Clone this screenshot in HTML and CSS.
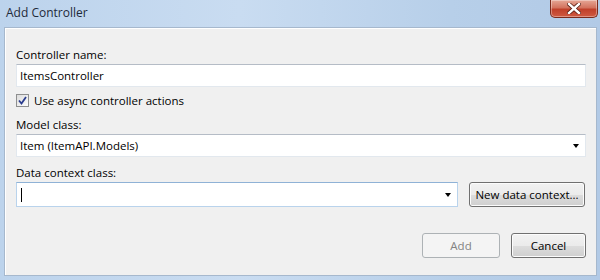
FILE: index.html
```html
<!DOCTYPE html>
<html lang="en">
<head>
  <meta charset="UTF-8">
  <title>Add Controller</title>
  <link rel="stylesheet" href="styles.css">
</head>
<body>
  <div class="window">
    <div class="titlebar">
      <span class="title">Add Controller</span>
      <div class="close">
        <svg width="14" height="11" viewBox="0 0 14 11">
          <path d="M2 1 L12 10 M12 1 L2 10" stroke="#5a1f14" stroke-width="4" stroke-linecap="square"/>
          <path d="M2 1 L12 10 M12 1 L2 10" stroke="#ffffff" stroke-width="2.4" stroke-linecap="square"/>
        </svg>
      </div>
    </div>

    <div class="panel">
      <div class="label">Controller name:</div>
      <div class="textbox">ItemsController</div>

      <label class="check-row">
        <span class="checkbox">
          <svg width="9" height="9" viewBox="0 0 9 9">
            <path d="M1 4.5 L3.5 7.5 L8 1" fill="none" stroke="#2a3c8e" stroke-width="1.8"/>
          </svg>
        </span>
        Use async controller actions
      </label>

      <div class="label">Model class:</div>
      <div class="textbox combo">
        <span>Item (ItemAPI.Models)</span>
        <span class="arrow"></span>
      </div>

      <div class="label">Data context class:</div>
      <div class="row">
        <div class="textbox combo focused">
          <span class="caret"></span>
          <span class="arrow"></span>
        </div>
        <button class="btn wide">New data context...</button>
      </div>

      <div class="actions">
        <button class="btn disabled">Add</button>
        <button class="btn">Cancel</button>
      </div>
    </div>
  </div>
</body>
</html>
```

FILE: styles.css
```css
body {
  margin: 0;
  font-family: "Open Sans", "Noto Sans", sans-serif;
  font-size: 11.5px;
  color: #000;
}

.window {
  width: 600px;
  height: 280px;
  display: flex;
  flex-direction: column;
  background: linear-gradient(90deg, #bcd3ec 0%, #c9dcf1 40%, #b7cfe9 75%, #b2cae6 100%);
}

.titlebar {
  height: 27px;
  display: flex;
  justify-content: space-between;
  align-items: flex-start;
  padding-left: 6px;
  flex: none;
}

.title {
  font-size: 12px;
  line-height: 16px;
  margin-top: 5px;
  color: #1e2a3a;
}

.close {
  width: 46px;
  height: 17px;
  margin-right: 2px;
  border: 1px solid #7a2a1c;
  border-top: none;
  border-radius: 0 0 5px 5px;
  background: linear-gradient(#e6a796 0%, #d3735e 45%, #c0402a 55%, #cf5a42 100%);
  box-shadow: inset 0 0 0 1px rgba(255, 255, 255, 0.35);
  display: flex;
  align-items: center;
  justify-content: center;
}

.panel {
  flex: 1;
  margin: 0 3px 4px 4px;
  border: 1px solid #a6b8cd;
  background: #f0f0f0;
  box-shadow: inset 1px 1px 0 #ffffff;
  padding: 19px 10px 0 11px;
  display: flex;
  flex-direction: column;
}

.label {
  line-height: 16px;
  height: 16px;
}

.textbox {
  height: 23px;
  margin-top: 1px;
  box-sizing: border-box;
  background: #fff;
  border: 1px solid #e2e8ee;
  border-top-color: #b5bcc6;
  padding-left: 3px;
  display: flex;
  align-items: center;
  line-height: 16px;
}

.textbox.focused {
  border-color: #b9d3ec;
  border-top-color: #8fb2d6;
}

.textbox + .label,
.check-row + .label {
  margin-top: 8px;
}

.check-row {
  display: flex;
  align-items: center;
  gap: 5px;
  height: 17px;
  margin-top: 5px;
}

.checkbox {
  width: 13px;
  height: 13px;
  box-sizing: border-box;
  border: 1px solid #8e8f8f;
  background: linear-gradient(135deg, #dcdcdc, #fdfdfd);
  display: flex;
  align-items: center;
  justify-content: center;
}

.combo {
  justify-content: space-between;
  padding-right: 6px;
}

.arrow {
  width: 0;
  height: 0;
  border-left: 3.5px solid transparent;
  border-right: 3.5px solid transparent;
  border-top: 4px solid #000;
  margin-top: 1px;
}

.caret {
  width: 1px;
  height: 14px;
  background: #000;
  margin-left: 1px;
}

.row {
  display: flex;
  align-items: flex-start;
  gap: 11px;
  margin-top: 1px;
}

.row .textbox {
  margin-top: 0;
  width: 442px;
  height: 25px;
}

.btn {
  font-family: inherit;
  font-size: 11.5px;
  height: 25px;
  box-sizing: border-box;
  border: 1px solid #707070;
  border-radius: 3px;
  background: linear-gradient(#f2f2f2 0%, #ebebeb 50%, #dddddd 51%, #cfcfcf 100%);
  box-shadow: inset 0 0 0 1px #fcfcfc;
  color: #000;
  padding: 0;
  width: 75px;
}

.btn.wide {
  width: 116px;
}

.btn.disabled {
  border-color: #adb2b5;
  background: #f4f4f4;
  box-shadow: none;
  color: #838383;
  width: 78px;
}

.actions {
  display: flex;
  justify-content: flex-end;
  gap: 11px;
  margin-top: 26px;
}
```
